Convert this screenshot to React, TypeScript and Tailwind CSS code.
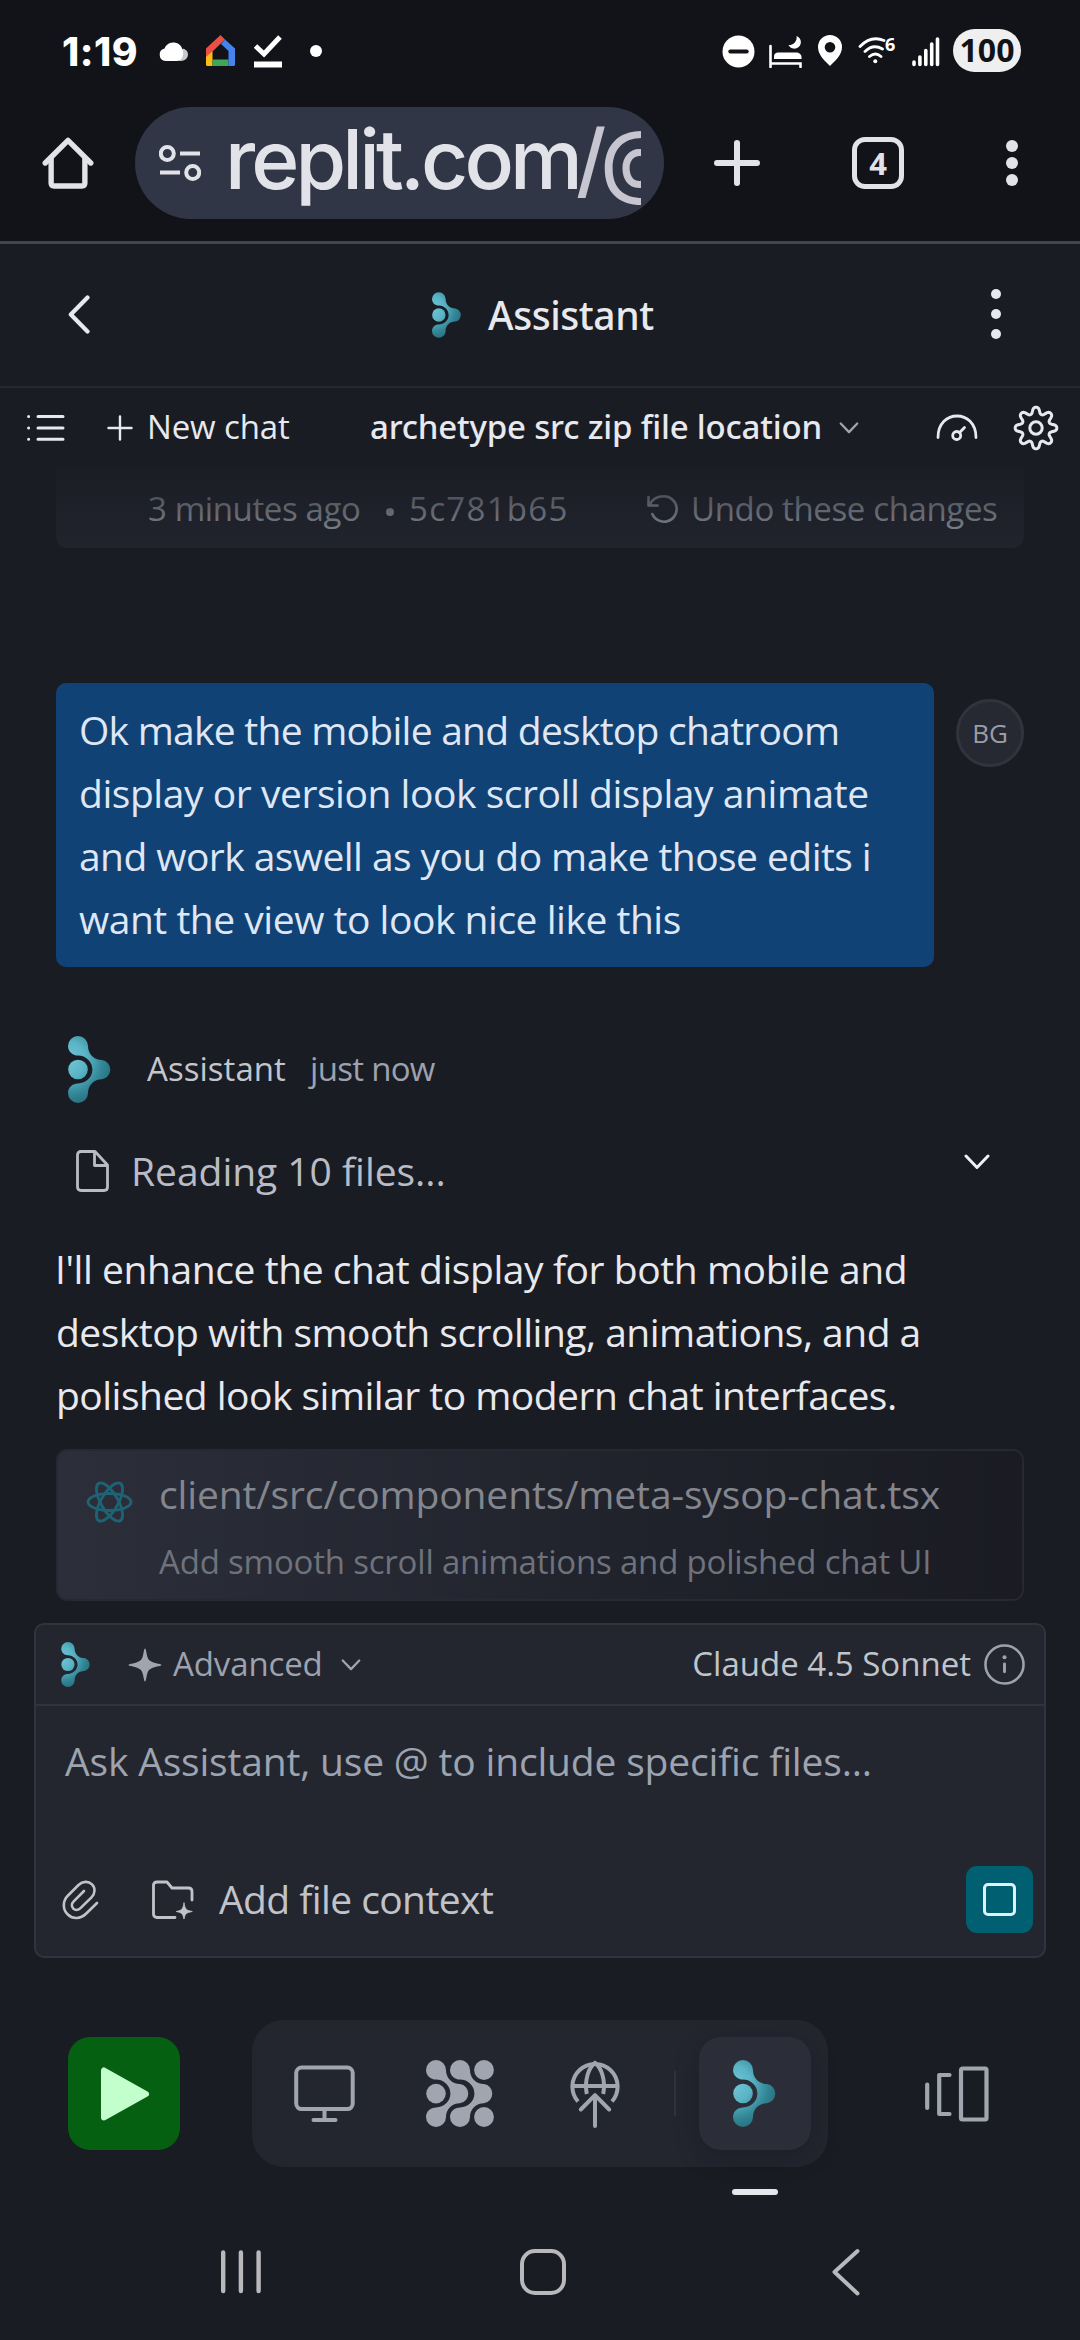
import React from "react";

const LOGO_BODY =
  "M0 10A10 10 0 0 1 20 10C20 18 26 24 34 24A9.7 9.7 0 0 1 34 43.2C26 43.2 20 49 20 57A10 10 0 0 1 0 57C0 51.5 4.5 47.5 10 47.5C18 47.5 24.4 41.2 24.4 33.6C24.4 26 18 19.6 10 19.6C4.5 19.6 0 15.5 0 10Z";

function AssistantLogo({ id, className }: { id: string; className: string }) {
  return (
    <svg viewBox="0 0 44 67" className={className}>
      <defs>
        <radialGradient id={id} gradientUnits="userSpaceOnUse" cx="0" cy="24" r="46">
          <stop offset="0" stopColor="#70c6d7" />
          <stop offset="0.4" stopColor="#5ab4c5" />
          <stop offset="0.75" stopColor="#338797" />
          <stop offset="1" stopColor="#276f7d" />
        </radialGradient>
      </defs>
      <path d={LOGO_BODY} fill={`url(#${id})`} />
      <circle cx="10" cy="33.5" r="9.8" fill={`url(#${id})`} />
    </svg>
  );
}

function Chevron({ className, strokeWidth = 2.5 }: { className: string; strokeWidth?: number }) {
  return (
    <svg viewBox="0 0 26 16" className={className} fill="none" stroke="currentColor" strokeWidth={strokeWidth} strokeLinecap="round" strokeLinejoin="round">
      <path d="M2 2L13 13.5L24 2" />
    </svg>
  );
}

function gearPath() {
  const steps = 240;
  const points: string[] = [];
  for (let i = 0; i < steps; i++) {
    const a = (i / steps) * Math.PI * 2;
    const r = 17.6 + 3.2 * (Math.tanh(1.2 * Math.cos(8 * a)) / Math.tanh(1.2));
    points.push(`${(23 + r * Math.cos(a)).toFixed(2)} ${(23 + r * Math.sin(a)).toFixed(2)}`);
  }
  return `M${points.join("L")}Z`;
}

function StatusBar() {
  return (
    <div className="flex h-[100px] items-center pl-[62px] pr-[59px] pt-[2px] text-white">
      <span className="w-[97px] whitespace-nowrap font-['Inter'] text-[39px] font-extrabold leading-none tracking-[0.5px]">1:19</span>
      <svg viewBox="0 0 29 20" className="h-5 w-[29px]">
        <path d="M22 20a7 6.5 0 0 0 2-12.5L20 20z" fill="#c9c9cb" />
        <circle cx="23.5" cy="13.5" r="5.5" fill="#c9c9cb" />
        <path d="M6.5 20a6.3 6.3 0 0 1-1-12.4A9.5 9.5 0 0 1 23.8 9.5c1.3 5-1 10.5-5.8 10.5z" fill="#fff" />
      </svg>
      <svg viewBox="0 0 29 31" className="mb-[2px] ml-[18px] h-[31px] w-[29px]">
        <path d="M0 21L6.5 15V31H1.5Q0 31 0 29.5Z" fill="#fbbc14" />
        <path d="M6.5 24.5H22.5V31H6.5Z" fill="#40a65a" />
        <path d="M0 13.5L14.5 0L19 4.5L6.5 16.5V16L0 22Z" fill="#ea5043" />
        <path d="M19 4.5L29 13.5V29.5Q29 31 27.5 31H22.5V16L15 9Z" fill="#4583ee" />
      </svg>
      <svg viewBox="0 0 28 34" className="ml-[19px] h-[34px] w-7">
        <path d="M1.5 12L10 20L26 3" fill="none" stroke="#fff" strokeWidth="5" />
        <path d="M0 27.5H28V33.5H0Z" fill="#fff" />
      </svg>
      <span className="ml-7 size-3 rounded-full bg-white" />
      <svg viewBox="0 0 34 34" className="ml-auto size-[33px]">
        <circle cx="17" cy="17" r="16.5" fill="#fff" />
        <path d="M8.5 17H25.5" stroke="#121318" strokeWidth="4" strokeLinecap="round" />
      </svg>
      <svg viewBox="0 0 33 33" className="ml-[14px] h-[33px] w-[33px]">
        <path d="M1.5 11V32M1.5 28.5H31.5V32" fill="none" stroke="#fff" strokeWidth="2.6" strokeLinecap="round" />
        <path d="M5 24V21.5C5 18.500 7 17.500 9 17.500H27C30 17.500 32.500 19.500 32.500 22V24Z" fill="#fff" />
        <path d="M27.5 1A6.500 6.500 0 1 1 19.500 10A7.500 7.500 0 0 0 27.500 1Z" fill="#fff" />
      </svg>
      <svg viewBox="0 0 24 31" className="mb-[1px] ml-4 h-[31px] w-6">
        <path fillRule="evenodd" d="M12 0A12 12 0 0 1 24 12C24 20 17 26 12 31C7 26 0 20 0 12A12 12 0 0 1 12 0ZM12 7A5.3 5.3 0 1 0 12 17.6A5.3 5.3 0 0 0 12 7Z" fill="#fff" />
      </svg>
      <div className="relative ml-4 h-7 w-[38px]">
        <svg viewBox="0 0 38 28" className="h-7 w-[38px]" fill="none" stroke="#fff" strokeWidth="2.8" strokeLinecap="round">
          <path d="M2 9.5Q13 -2 26 3.500M7 14.500Q15 6.500 24.500 12M11.500 19.500Q17.500 14.500 23 19.500" />
          <circle cx="17.300" cy="24.300" r="2" fill="#fff" stroke="none" />
        </svg>
        <span className="absolute -top-[2px] left-[27px] font-['Noto_Sans'] text-[18px] font-bold leading-[18px]">6</span>
      </div>
      <svg viewBox="0 0 28 31" className="ml-4 h-[31px] w-7" stroke="#fff" strokeWidth="3.6" strokeLinecap="round">
        <path d="M2 26V28.500M7.900 21V28.500M13.800 14.500V28.500M19.700 8V28.500M25.500 3V28.500" />
      </svg>
      <span className="-mt-[2px] ml-[13px] flex h-[43px] w-[68px] items-center justify-center rounded-full bg-[#efeff0] font-['Noto_Sans'] text-[32px] font-bold leading-none text-[#121318]">100</span>
    </div>
  );
}

function BrowserBar() {
  return (
    <div className="flex h-[144px] items-start border-b-[3px] border-[#44464f] pt-[7px] text-[#e2e2e9]">
      <div className="flex h-28 w-full items-center pl-[42px]">
        <svg viewBox="0 0 52 53" className="size-[52px]" fill="none" stroke="currentColor" strokeWidth="5.500" strokeLinecap="round" strokeLinejoin="round">
          <path d="M2.800 26.500L26 3.500L49.200 26.500" />
          <path d="M8.800 22V47Q8.800 50 11.800 50H40.200Q43.200 50 43.200 47V22" />
        </svg>
        <div className="ml-[41px] flex h-28 w-[529px] items-center rounded-full bg-[#313646] pl-6">
          <svg viewBox="0 0 42 37" className="size-[42px]" fill="none" stroke="currentColor" strokeWidth="4">
            <circle cx="8.300" cy="9" r="6.500" />
            <circle cx="33.700" cy="28" r="6.500" />
            <path d="M21 9H41M1 28H21" />
          </svg>
          <div className="ml-[24px] flex h-28 w-[416px] items-center overflow-hidden whitespace-nowrap pb-[6px] font-['Inter'] text-[82px] font-medium leading-[112px] tracking-[-3.880px]">
            replit.com<span className="-ml-[3px] tracking-[-6px] text-[#c6c5d0]">/@</span>
          </div>
        </div>
        <svg viewBox="0 0 46 46" className="ml-[50px] size-[46px]" stroke="currentColor" strokeWidth="6" strokeLinecap="round">
          <path d="M23 3V43M3 23H43" />
        </svg>
        <div className="ml-[92px] flex size-[52px] items-center justify-center rounded-[13px] border-[5.500px] border-current font-['Open_Sans'] text-[31px] font-bold leading-none">4</div>
        <div className="ml-[102px] flex flex-col gap-[5px]">
          <i className="size-3 rounded-full bg-current" />
          <i className="size-3 rounded-full bg-current" />
          <i className="size-3 rounded-full bg-current" />
        </div>
      </div>
    </div>
  );
}

function AppHeader() {
  return (
    <div className="flex h-36 items-center border-b-2 border-[#252733] pl-[68px] text-[#e8e9ee]">
      <svg viewBox="0 0 22 39" className="mb-[2px] h-[39px] w-[22px]" fill="none" stroke="currentColor" strokeWidth="4.200" strokeLinecap="round" strokeLinejoin="round">
        <path d="M19.500 2.500L2.800 19.500L19.500 36.500" />
      </svg>
      <AssistantLogo id="logoHeader" className="ml-[342px] h-[46px] w-[30px]" />
      <span className="ml-[26px] w-[200px] whitespace-nowrap pb-[1px] font-['Noto_Sans'] text-[39px] font-medium leading-[50px] tracking-[-0.420px]">Assistant</span>
      <div className="mb-[2px] ml-auto mr-[79px] flex flex-col gap-[9.600px]">
        <i className="size-[10px] rounded-full bg-current" />
        <i className="size-[10px] rounded-full bg-current" />
        <i className="size-[10px] rounded-full bg-current" />
      </div>
    </div>
  );
}

function ChatToolbar() {
  return (
    <div className="flex h-[79px] items-center pl-[27px] text-[33px] leading-[44px] text-[#e8e9ee]">
      <svg viewBox="0 0 38 28" className="h-7 w-[38px]" stroke="currentColor" strokeWidth="3" strokeLinecap="round">
        <path d="M11 2.500H36M11 14H36M11 25.300H36M1.600 2.500h.01M1.600 14h.01M1.600 25.300h.01" />
      </svg>
      <svg viewBox="0 0 26 26" className="ml-[42px] size-[26px]" stroke="currentColor" strokeWidth="2.400" strokeLinecap="round">
        <path d="M13 1.500V24.500M1.500 13H24.500" />
      </svg>
      <span className="ml-[14px] w-[223px] whitespace-nowrap pb-[1px] tracking-[-0.130px]">New chat</span>
      <span className="w-[469px] whitespace-nowrap pb-[1px] font-['Noto_Sans'] font-medium tracking-[-0.180px]">archetype src zip file location</span>
      <Chevron className="h-3 w-5 text-[#a0a4b0]" strokeWidth={3} />
      <svg viewBox="0 0 42 28" className="ml-[77px] h-7 w-[42px]" fill="none" stroke="currentColor" strokeWidth="2.800" strokeLinecap="round">
        <path d="M2 23.500C2 -5.200 40 -5.200 40 23.500" />
        <circle cx="20.700" cy="21.500" r="4" />
        <path d="M23.600 18.500L28.500 13.500" />
      </svg>
      <svg viewBox="0 0 46 46" className="ml-[35px] size-[46px]" fill="none" stroke="currentColor" strokeWidth="3" strokeLinejoin="round">
        <path d={gearPath()} />
        <circle cx="23" cy="23" r="6.200" />
      </svg>
    </div>
  );
}

function CommitCard() {
  return (
    <div className="relative mx-[56px]">
      <div className="flex h-[81px] items-center rounded-b-[11px] bg-[#22252e] pl-[92px] pt-[2px] text-[33px] leading-[44px] text-[#a0a5ae]">
        <span className="w-[238px] whitespace-nowrap tracking-[-0.390px]">3 minutes ago</span>
        <i className="mt-[6px] size-2 rounded-full bg-current" />
        <span className="ml-[15px] w-[238px] whitespace-nowrap tracking-[1.310px]">5c781b65</span>
        <svg viewBox="0 0 32 30" className="h-[30px] w-8" fill="none" stroke="currentColor" strokeWidth="2.600" strokeLinecap="round" strokeLinejoin="round">
          <path d="M1.500 3V11.500H10.500" />
          <path d="M2.500 11C5 5.500 10.500 2.300 17 2.300A12.700 12.700 0 1 1 5.300 20" />
        </svg>
        <span className="ml-[12px] whitespace-nowrap tracking-[-0.370px]">Undo these changes</span>
      </div>
      <div className="absolute -top-[12px] left-0 h-[105px] w-full bg-gradient-to-b from-[#1a1c24] to-[#1a1c24]/0" />
    </div>
  );
}

function Conversation() {
  return (
    <div className="flex flex-col px-[56px]">
      <div className="mt-[135px] flex items-start">
        <div className="w-[878px] whitespace-nowrap rounded-[10px] bg-[#114275] pb-[17px] pl-[23px] pt-[15px] text-[39px] leading-[63px] text-[#dfe6f4]">
          <div className="tracking-[-0.740px]">Ok make the mobile and desktop chatroom</div>
          <div className="tracking-[-0.450px]">display or version look scroll display animate</div>
          <div className="tracking-[-0.570px]">and work aswell as you do make those edits i</div>
          <div className="tracking-[-0.480px]">want the view to look nice like this</div>
        </div>
        <div className="ml-[22px] mt-4 flex size-[68px] items-center justify-center rounded-full border-[3px] border-[#31333e] bg-[#262832] pb-[1px] text-[26px] leading-none text-[#9a9da7]">BG</div>
      </div>

      <div className="mt-[69px] flex h-[67px] items-center pl-3 text-[33px] leading-[44px]">
        <AssistantLogo id="logoMessage" className="h-[67px] w-[44px]" />
        <span className="ml-[35px] w-[163px] whitespace-nowrap pb-[1px] tracking-[0.040px] text-[#c2c6cd]">Assistant</span>
        <span className="whitespace-nowrap pb-[1px] tracking-[-0.700px] text-[#9da2ae]">just now</span>
      </div>

      <div className="mt-9 flex h-[63px] items-center pl-5 text-[39px] leading-[63px] text-[#b9bcc4]">
        <svg viewBox="0 0 33 42" className="h-[42px] w-[33px]" fill="none" stroke="currentColor" strokeWidth="2.800" strokeLinejoin="round">
          <path d="M1.500 5Q1.500 1.500 5 1.500H19L31.500 15V37Q31.500 40.500 28 40.500H5Q1.500 40.500 1.500 37Z" />
          <path d="M18.500 1.500V15.500H31.500" />
        </svg>
        <span className="ml-[22px] whitespace-nowrap pb-[1px] tracking-[-0.030px]">Reading 10 files...</span>
        <Chevron className="mb-[18px] ml-auto mr-[34px] h-4 w-[26px] text-[#f0f1f5]" strokeWidth={3} />
      </div>

      <div className="mt-[35px] whitespace-nowrap text-[39px] leading-[63px] text-[#e8e9ee]">
        <div className="-ml-[1px] tracking-[-0.430px]">I'll enhance the chat display for both mobile and</div>
        <div className="tracking-[-0.520px]">desktop with smooth scrolling, animations, and a</div>
        <div className="tracking-[-0.520px]">polished look similar to modern chat interfaces.</div>
      </div>

      <div className="mt-[23px] flex h-[152px] items-start rounded-[11px] border-2 border-[#262832] bg-gradient-to-r from-[#2c2e3a] via-[#22252e] to-[#1a1b23] bg-origin-border pl-7">
        <svg viewBox="0 0 46 42" className="mt-[30px] h-[42px] w-[47px]" fill="none" stroke="#1e6374" strokeWidth="2.900">
          <ellipse cx="23" cy="21" rx="21.500" ry="8.500" />
          <ellipse cx="23" cy="21" rx="21.500" ry="8.500" transform="rotate(60 23 21)" />
          <ellipse cx="23" cy="21" rx="21.500" ry="8.500" transform="rotate(120 23 21)" />
        </svg>
        <div className="ml-[26px] whitespace-nowrap">
          <div className="mt-[11px] text-[39px] leading-[63px] tracking-[-0.120px] text-[#84868e]">client/src/components/meta-sysop-chat.tsx</div>
          <div className="mt-[15px] text-[33px] leading-[44px] tracking-[-0.200px] text-[#6f727b]">Add smooth scroll animations and polished chat UI</div>
        </div>
      </div>
    </div>
  );
}

function Composer() {
  return (
    <div className="mx-[34px] mt-[22px] h-[335px] rounded-[10px] border-2 border-[#31333e] bg-[#23262f]">
      <div className="flex h-[81px] items-center border-b-2 border-[#31333e] pl-[25px] text-[33px] leading-[44px]">
        <AssistantLogo id="logoComposer" className="h-[45px] w-[30px]" />
        <svg viewBox="0 0 34 34" className="ml-[37px] size-[34px] text-[#a0a4af]" fill="currentColor">
          <path d="M17 0.500C18 0.500 18 3 18.800 6.500C20 11.500 21 13.200 27 15C31 16.100 33.500 16 33.500 17C33.500 18 31 17.900 27 19C21 20.800 20 22.500 18.800 27.500C18 31 18 33.500 17 33.500C16 33.500 16 31 15.200 27.500C14 22.500 13 20.800 7 19C3 17.900 0.500 18 0.500 17C0.500 16 3 16.100 7 15C13 13.200 14 11.500 15.200 6.500C16 3 16 0.500 17 0.500Z" />
        </svg>
        <span className="ml-[11px] w-[168px] whitespace-nowrap pb-[1px] tracking-[-0.120px] text-[#9da2ae]">Advanced</span>
        <Chevron className="h-3 w-5 text-[#a0a4b0]" strokeWidth={3} />
        <span className="ml-auto whitespace-nowrap pb-[1px] text-[#c0c5ca]">Claude 4.5 Sonnet</span>
        <svg viewBox="0 0 42 42" className="ml-[13px] mr-[19px] size-[41px] text-[#9da2ae]" fill="none" stroke="currentColor" strokeWidth="2.600" strokeLinecap="round">
          <circle cx="21" cy="21" r="19.500" />
          <path d="M21 20.500V28.500" strokeWidth="3" />
          <circle cx="21" cy="13.500" r="2.100" fill="currentColor" stroke="none" />
        </svg>
      </div>
      <div className="mt-[23px] whitespace-nowrap pl-[29px] text-[39px] leading-[63px] tracking-[-0.180px] text-[#9da3af]">Ask Assistant, use @ to include specific files...</div>
      <div className="mt-[74px] flex h-[67px] items-center pl-[26px] pr-[11px] text-[#c0c4ca]">
        <svg viewBox="0 0 37 40" className="h-10 w-[37px]" fill="none" stroke="currentColor" strokeWidth="2.600" strokeLinecap="round" strokeLinejoin="round">
          <path d="M35 23L24 33.800C18.500 39 11 39.500 5.800 34.500C0.500 29.500 0.500 21 5.800 15.800L16.500 5C20.500 1 26.500 0.800 30 4.300C33.500 7.800 33.300 13.500 29.500 17.300L18.500 28.200C16.300 30.400 13.200 30.500 11.300 28.600C9.300 26.600 9.500 23.600 11.700 21.400L22 11" />
        </svg>
        <svg viewBox="0 0 42 40" className="ml-[53px] h-10 w-[42px]" fill="none" stroke="currentColor" strokeWidth="2.800" strokeLinecap="round" strokeLinejoin="round">
          <path d="M23 37.500H5Q1.500 37.500 1.500 34V5Q1.500 2 5 2H15L20 8H36.500Q40 8 40 11.500V20" />
          <path d="M32 23C33.200 29.500 34.200 30.300 40.300 31.500C34.200 32.700 33.200 33.500 32 39C30.800 33.500 29.800 32.700 24.200 31.500C29.800 30.300 30.800 29.500 32 23Z" fill="currentColor" strokeWidth="0.800" />
        </svg>
        <span className="ml-[25px] whitespace-nowrap pb-[1px] text-[39px] leading-[50px] tracking-[-0.580px]">Add file context</span>
        <div className="ml-auto flex size-[67px] items-center justify-center rounded-[11px] bg-[#005f70]">
          <div className="size-[33px] rounded-[5px] border-[3px] border-[#e0f0fb]" />
        </div>
      </div>
    </div>
  );
}

function Dock() {
  return (
    <div className="mt-[62px] flex h-[147px] items-center pl-[68px]">
      <div className="flex h-[113px] w-28 items-center justify-center rounded-[22px] bg-[#056012]">
        <svg viewBox="0 0 48 54" className="ml-[2px] h-[54px] w-12" fill="#c2ffcd" stroke="#c2ffcd" strokeWidth="6" strokeLinejoin="round">
          <path d="M3 3.500V50.500L45 27Z" />
        </svg>
      </div>
      <div className="ml-[72px] flex h-[147px] w-[576px] items-center rounded-[32px] bg-[#23262f] pl-[42px] text-[#a0a5b0]">
        <svg viewBox="0 0 61 58" className="h-[58px] w-[61px]" fill="none" stroke="currentColor" strokeWidth="4" strokeLinecap="round">
          <rect x="2.200" y="2.600" width="56.500" height="41.500" rx="5.500" />
          <path d="M30.500 44V54M19.500 55H41.500" />
        </svg>
        <svg viewBox="0 0 68 67" className="ml-[71px] h-[67px] w-[68px]" fill="currentColor">
          <path d={LOGO_BODY} />
          <path d={LOGO_BODY} transform="translate(24 0)" />
          <circle cx="10" cy="33.600" r="9.800" />
          <circle cx="58" cy="10" r="9.900" />
          <circle cx="58" cy="57" r="9.900" />
        </svg>
        <svg viewBox="0 0 50 68" className="ml-[76px] h-[68px] w-[50px]" fill="none" stroke="currentColor" strokeWidth="4" strokeLinecap="butt">
          <path d="M8 41.500A22.600 22.600 0 1 1 42 41.500" />
          <path d="M2.500 26H47.500M16.800 34C14 20 19 7 25 3C31 7 36 20 33.200 34" />
          <path d="M25 66V35.500M10.800 49.500L25 35.200L39.200 49.500" strokeLinecap="round" strokeLinejoin="round" />
        </svg>
        <i className="ml-[54px] h-[45px] w-[2px] bg-[#31333e]" />
        <div className="ml-[23px] flex h-[113px] w-28 items-center justify-center rounded-[22px] bg-[#2b2d38] shadow-[0_8px_24px_rgba(10,10,20,0.25)]">
          <AssistantLogo id="logoDock" className="h-[67px] w-[44px]" />
        </div>
      </div>
      <svg viewBox="0 0 64 56" className="ml-[97px] h-14 w-16 text-[#a0a5b0]" fill="none" stroke="currentColor" strokeWidth="4.200" strokeLinecap="round" strokeLinejoin="round">
        <path d="M2.200 18.500V42M24.500 9H14.200V48H24.500" />
        <rect x="36" y="2.500" width="25.500" height="51" rx="1.500" />
      </svg>
    </div>
  );
}

export default function App() {
  return (
    <div className="h-[2340px] w-[1080px] overflow-hidden bg-[#1a1c24] font-['Open_Sans','Noto_Sans',sans-serif]">
      <div className="bg-[#121318]">
        <StatusBar />
        <BrowserBar />
      </div>
      <AppHeader />
      <ChatToolbar />
      <CommitCard />
      <Conversation />
      <Composer />
      <Dock />
      <div className="ml-[732px] mt-[22px] h-[6px] w-[46px] rounded-full bg-[#e6e7eb]" />
      <div className="mt-[27px] flex h-[100px] items-center pl-[220px] text-[#b9b9bc]">
        <svg viewBox="0 0 42 46" className="h-[46px] w-[42px]" stroke="currentColor" strokeWidth="4.400" strokeLinecap="round">
          <path d="M3.200 3.500V42M20.900 3.500V42M38.600 3.500V42" />
        </svg>
        <div className="ml-[258px] size-[46px] rounded-[15px] border-4 border-current" />
        <svg viewBox="0 0 28 48" className="ml-[266px] h-12 w-7" fill="none" stroke="currentColor" strokeWidth="4" strokeLinecap="round" strokeLinejoin="round">
          <path d="M25.500 3L2.500 24L25.500 45.500" />
        </svg>
      </div>
    </div>
  );
}
